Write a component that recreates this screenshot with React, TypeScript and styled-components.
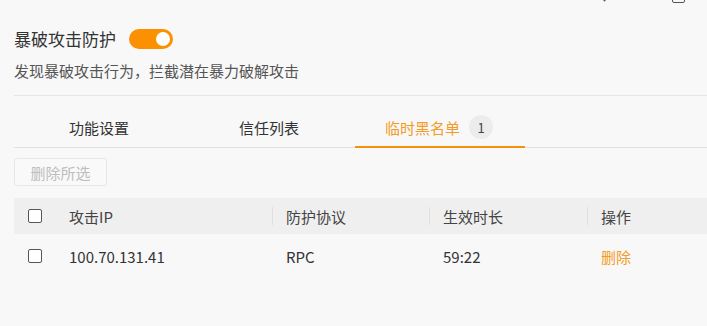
import React, { useState } from 'react'
import styled, { createGlobalStyle } from 'styled-components'

const GlobalStyle = createGlobalStyle`
  html, body {
    margin: 0;
    padding: 0;
    background: #f8f8f8;
  }
  body {
    font-family: "Noto Sans CJK SC", "Noto Sans", "Liberation Sans", sans-serif;
    color: #333;
  }
`

const Page = styled.div`
  position: relative;
  width: 707px;
  height: 326px;
  overflow: hidden;
  padding-left: 14px;
  box-sizing: border-box;
`

// bits of the window chrome above, cut off by the screenshot edge
const WindowControls = styled.div`
  position: absolute;
  top: -10px;
  right: 22px;
  display: flex;
  align-items: flex-end;
  gap: 64px;
`

const Chevron = styled.div`
  width: 6px;
  height: 6px;
  border-right: 1.5px solid #555;
  border-bottom: 1.5px solid #555;
  transform: rotate(45deg);
  margin-bottom: 3px;
`

const Square = styled.div`
  width: 11px;
  height: 11px;
  border: 1.5px solid #555;
  border-radius: 2px;
`

const TitleRow = styled.div`
  display: flex;
  align-items: center;
  gap: 13px;
  height: 22px;
  margin-top: 28px;
`

const Title = styled.div`
  font-size: 17px;
  color: #333;
  line-height: 22px;
`

const Toggle = styled.button<{ $on: boolean }>`
  position: relative;
  width: 44px;
  height: 20px;
  border: none;
  padding: 0;
  border-radius: 10px;
  background: ${({ $on }) => ($on ? '#fb9000' : '#ccc')};
  cursor: pointer;

  &::after {
    content: '';
    position: absolute;
    top: 3px;
    left: ${({ $on }) => ($on ? '27px' : '3px')};
    width: 14px;
    height: 14px;
    border-radius: 50%;
    background: #fff;
  }
`

const Subtitle = styled.div`
  font-size: 15px;
  color: #555;
  line-height: 20px;
  margin-top: 11px;
`

const Divider = styled.div`
  height: 1px;
  background: #e6e6e6;
  margin-top: 14px;
`

const Tabs = styled.div`
  display: flex;
  margin-top: 11px;
  border-bottom: 1px solid #e2e2e2;
`

const Tab = styled.div<{ $active?: boolean }>`
  position: relative;
  width: 170px;
  height: 40px;
  display: flex;
  align-items: center;
  justify-content: center;
  gap: 9px;
  font-size: 15px;
  color: ${({ $active }) => ($active ? '#f49b26' : '#333')};
  cursor: pointer;

  &::after {
    content: '';
    display: ${({ $active }) => ($active ? 'block' : 'none')};
    position: absolute;
    left: 1px;
    right: -1px;
    bottom: -1px;
    height: 2px;
    background: #f7900a;
  }
`

const Badge = styled.span`
  display: inline-flex;
  align-items: center;
  justify-content: center;
  width: 24px;
  height: 24px;
  border-radius: 12px;
  background: #ececec;
  color: #444;
  font-size: 13px;
`

const Toolbar = styled.div`
  margin-top: 10px;
  display: flex;
`

const Button = styled.button`
  height: 28px;
  width: 93px;
  border: 1px solid #e6e6e6;
  border-radius: 3px;
  background: #f9f9f9;
  color: #bdbdbd;
  font-family: inherit;
  font-size: 15px;
  padding: 0;
  cursor: not-allowed;
`

const Table = styled.div`
  margin-top: 12px;
`

const Row = styled.div<{ $head?: boolean }>`
  display: grid;
  grid-template-columns: 41px 217px 157px 158px 1fr;
  align-items: center;
  height: ${({ $head }) => ($head ? '36px' : '44px')};
  background: ${({ $head }) => ($head ? '#efefef' : 'transparent')};
  font-size: 15px;
  color: ${({ $head }) => ($head ? '#444' : '#333')};
`

const Cell = styled.div<{ $sep?: boolean }>`
  position: relative;
  padding-left: 14px;
  white-space: nowrap;

  &::before {
    content: '';
    display: ${({ $sep }) => ($sep ? 'block' : 'none')};
    position: absolute;
    left: 0;
    top: 50%;
    transform: translateY(-50%);
    width: 1px;
    height: 18px;
    background: #e0e0e0;
  }
`

const CheckCell = styled.div`
  display: flex;
  align-items: center;
  padding-left: 14px;
`

const Checkbox = styled.span`
  display: inline-block;
  width: 12px;
  height: 12px;
  border: 1.5px solid #555;
  border-radius: 2px;
  background: #fff;
`

const Link = styled.span`
  color: #f49b26;
  cursor: pointer;
`

const rows = [{ ip: '100.70.131.41', protocol: 'RPC', duration: '59:22' }]

const App = () => {
  const [on, setOn] = useState(true)

  return (
    <Page>
      <GlobalStyle />
      <WindowControls>
        <Chevron />
        <Square />
      </WindowControls>

      <TitleRow>
        <Title>暴破攻击防护</Title>
        <Toggle $on={on} onClick={() => setOn(!on)} />
      </TitleRow>
      <Subtitle>发现暴破攻击行为，拦截潜在暴力破解攻击</Subtitle>
      <Divider />

      <Tabs>
        <Tab>功能设置</Tab>
        <Tab>信任列表</Tab>
        <Tab $active>
          临时黑名单
          <Badge>1</Badge>
        </Tab>
      </Tabs>

      <Toolbar>
        <Button disabled>删除所选</Button>
      </Toolbar>

      <Table>
        <Row $head>
          <CheckCell><Checkbox /></CheckCell>
          <Cell>攻击IP</Cell>
          <Cell $sep>防护协议</Cell>
          <Cell $sep>生效时长</Cell>
          <Cell $sep>操作</Cell>
        </Row>
        {rows.map((r) => (
          <Row key={r.ip}>
            <CheckCell><Checkbox /></CheckCell>
            <Cell>{r.ip}</Cell>
            <Cell>{r.protocol}</Cell>
            <Cell>{r.duration}</Cell>
            <Cell><Link>删除</Link></Cell>
          </Row>
        ))}
      </Table>
    </Page>
  )
}

export default App
